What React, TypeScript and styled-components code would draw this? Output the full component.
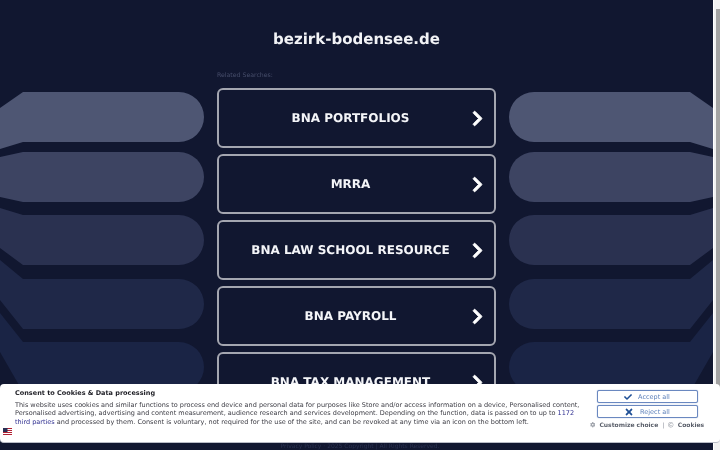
import React from 'react';
import styled, { createGlobalStyle } from 'styled-components';
import { FaChevronRight, FaCheck, FaTimes, FaCog, FaRegCopyright } from 'react-icons/fa';

const Global = createGlobalStyle`
  html, body { margin: 0; padding: 0; height: 450px; overflow: hidden; background: #111730; }
  * { box-sizing: border-box; }
`;

const Viewport = styled.div`
  position: relative;
  width: 720px;
  height: 450px;
  display: flex;
  overflow: hidden;
  font-family: "DejaVu Sans", sans-serif;
  text-rendering: geometricPrecision;
  will-change: transform;
`;

const Page = styled.div`
  width: 713px;
  height: 450px;
  display: flex;
  flex-direction: column;
  background: #111730;
`;

const Columns = styled.div`
  flex: 1;
  min-height: 0;
  display: grid;
  grid-template-columns: 204px 279px 204px;
  column-gap: 13px;
  overflow: hidden;
`;

const Side = styled.svg`
  display: block;
  width: 204px;
  height: 443px;
`;

const Center = styled.main`
  display: flex;
  flex-direction: column;
  align-items: stretch;
  padding-top: 28px;
`;

const Title = styled.h1`
  margin: 0;
  height: 22px;
  line-height: 22px;
  font-size: 15px;
  font-weight: 700;
  color: #f2f3f6;
  text-align: center;
  white-space: nowrap;
`;

const Related = styled.div`
  margin-top: 21px;
  height: 9px;
  line-height: 9px;
  font-size: 6.2px;
  color: #474e6b;
`;

const List = styled.div`
  margin-top: 8px;
  display: flex;
  flex-direction: column;
  gap: 6px;
`;

const Link = styled.a`
  flex: none;
  height: 60px;
  padding: 0 11px 0 0;
  display: flex;
  align-items: center;
  border: 2px solid #a4a6b0;
  border-radius: 6px;
  background: #111730;
  color: #f4f5f8;
  text-decoration: none;
`;

const LinkText = styled.span`
  flex: 1;
  text-align: center;
  padding-left: 10px;
  font-size: 12px;
  font-weight: 700;
  white-space: nowrap;
`;

const Chevron = styled(FaChevronRight)`
  flex: none;
  width: 11px;
  height: 17px;
  color: #fff;
  stroke: currentColor;
  stroke-width: 24px;
`;

const Footer = styled.footer`
  flex: none;
  height: 7px;
  line-height: 7px;
  padding-left: 7px;
  font-size: 6px;
  color: #2a3150;
  text-align: center;
  white-space: nowrap;
`;

const Scrollbar = styled.div`
  width: 7px;
  height: 450px;
  padding: 9px 1px 0 2px;
  background: #f1f1f1;
  border-left: 1px solid #fff;
`;

const Thumb = styled.div`
  width: 4px;
  height: 380px;
  background: #a3a3a3;
`;

const Consent = styled.section`
  position: absolute;
  left: 0;
  right: 0;
  top: 384px;
  height: 59px;
  display: flex;
  justify-content: space-between;
  padding: 5px 15px 0 15px;
  background: #fff;
  border-radius: 4px;
  border-bottom: 1px solid #b9bcc6;
`;

const ConsentText = styled.div`
  width: 568px;
`;

const ConsentTitle = styled.div`
  height: 8px;
  line-height: 8px;
  font-size: 6.5px;
  font-weight: 700;
  color: #1d1d24;
  margin-bottom: 3.5px;
  white-space: nowrap;
`;

const Paragraph = styled.p`
  margin: 0;
  font-size: 6.5px;
  line-height: 8.6px;
  color: #3c3c44;
`;

const Anchor = styled.a`
  color: #2e2e90;
  text-decoration: none;
`;

const Flag = styled.svg`
  position: absolute;
  left: 3px;
  top: 44px;
  width: 9px;
  height: 7px;
`;

const Actions = styled.div`
  width: 114px;
  margin-right: 1px;
  display: flex;
  flex-direction: column;
  align-items: center;
  gap: 2px;
  margin-top: 1px;
`;

const ActionButton = styled.button`
  width: 101px;
  height: 13px;
  padding: 1px 0 0;
  display: flex;
  align-items: center;
  justify-content: center;
  gap: 6px;
  border: 1px solid #6a88c0;
  border-radius: 2px;
  box-shadow: 0 0 1px #6a88c0;
  background: #fff;
  color: #5f82bb;
  font-family: inherit;
  font-size: 6.5px;
  line-height: 1;
`;

const ButtonIcon = styled.span`
  display: flex;
  margin-top: -1px;
  color: #1f4f96;
  font-size: ${(p: { $size: number }) => p.$size}px;
`;

const Options = styled.div`
  display: flex;
  align-items: center;
  gap: 4px;
  height: 10px;
  font-size: 6px;
  font-weight: 700;
  color: #5a5f6a;
  white-space: nowrap;
`;

const Option = styled.span`
  display: flex;
  align-items: center;
  gap: 4px;
`;

const OptionIcon = styled.span`
  display: flex;
  color: #a0a4ac;
  font-size: 5.5px;
`;

const Divider = styled.span`
  font-weight: 400;
  color: #8a8e98;
`;

const bands = [
  { fill: '#4e5673', d: 'M0 108 L23 92 H179 A25 25 0 0 1 179 142 H23 L0 149 Z' },
  { fill: '#3d4462', d: 'M0 157 L23 152 H179 A25 25 0 0 1 179 202 H23 L0 197 Z' },
  { fill: '#2a3150', d: 'M0 208 L23 215 H179 A25 25 0 0 1 179 265 H23 L0 248 Z' },
  { fill: '#1f2848', d: 'M0 260 L23 279 H179 A25 25 0 0 1 179 329 H23 L0 300 Z' },
  { fill: '#1a2445', d: 'M0 313 L23 342 H179 A25 25 0 0 1 179 392 H23 L0 352 Z' },
  { fill: '#1a2445', d: 'M17 443 L17 392 L179 392 V443 Z' },
];

const BandArt = ({ mirrored }: { mirrored?: boolean }) => (
  <Side viewBox="0 0 204 443" aria-hidden="true">
    <g transform={mirrored ? 'translate(204 0) scale(-1 1)' : undefined}>
      {bands.map((b) => (
        <path key={b.d} d={b.d} fill={b.fill} />
      ))}
    </g>
  </Side>
);

const links = ['BNA PORTFOLIOS', 'MRRA', 'BNA LAW SCHOOL RESOURCE', 'BNA PAYROLL', 'BNA TAX MANAGEMENT'];

export default function App() {
  return (
    <>
      <Global />
      <Viewport>
        <Page>
          <Columns>
            <BandArt />
            <Center>
              <Title>bezirk-bodensee.de</Title>
              <Related>Related Searches:</Related>
              <List>
                {links.map((l) => (
                  <Link key={l} href="#">
                    <LinkText>{l}</LinkText>
                    <Chevron />
                  </Link>
                ))}
              </List>
            </Center>
            <BandArt mirrored />
          </Columns>
          <Footer>Privacy Policy · 2025 Copyright | All Rights Reserved.</Footer>
        </Page>
        <Scrollbar>
          <Thumb />
        </Scrollbar>
        <Consent>
          <ConsentText>
            <ConsentTitle>Consent to Cookies &amp; Data processing</ConsentTitle>
            <Paragraph>
              This website uses cookies and similar functions to process end device and personal data for purposes like Store and/or access information on a device, Personalised content, Personalised advertising, advertising and content measurement, audience research and services development. Depending on the function, data is passed on to up to <Anchor href="#">1172 third parties</Anchor> and processed by them. Consent is voluntary, not required for the use of the site, and can be revoked at any time via an icon on the bottom left.
            </Paragraph>
          </ConsentText>
          <Flag viewBox="0 0 9 7" aria-hidden="true">
            <rect width="9" height="7" fill="#fff" />
            <path d="M0 .5H9M0 2.5H9M0 4.5H9M0 6.5H9" stroke="#b22234" strokeWidth="1" />
            <rect width="4.5" height="4" fill="#2b2f55" />
          </Flag>
          <Actions>
            <ActionButton>
              <ButtonIcon $size={8}><FaCheck /></ButtonIcon>
              Accept all
            </ActionButton>
            <ActionButton>
              <ButtonIcon $size={10}><FaTimes /></ButtonIcon>
              Reject all
            </ActionButton>
            <Options>
              <Option><OptionIcon><FaCog /></OptionIcon>Customize choice</Option>
              <Divider>|</Divider>
              <Option><OptionIcon><FaRegCopyright /></OptionIcon>Cookies</Option>
            </Options>
          </Actions>
        </Consent>
      </Viewport>
    </>
  );
}
